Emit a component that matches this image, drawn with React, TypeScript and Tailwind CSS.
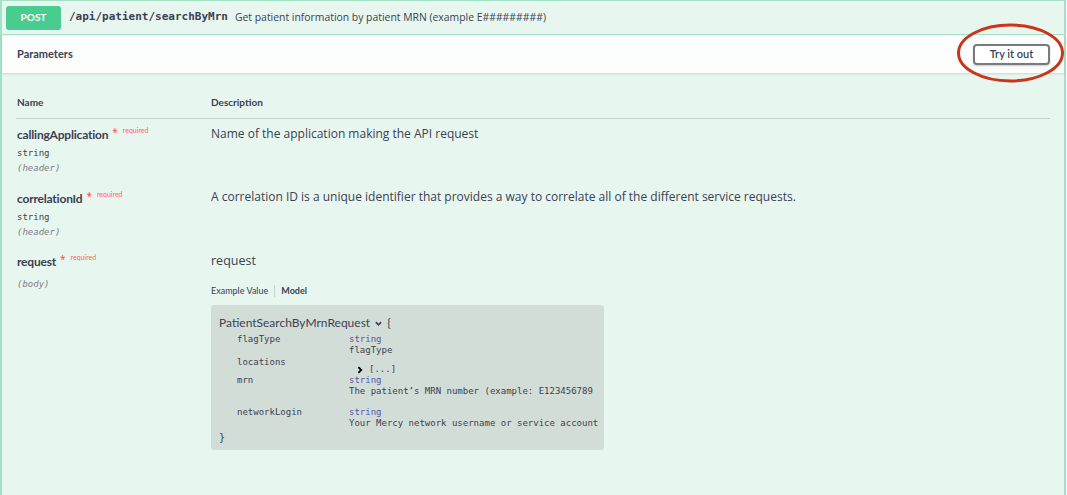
import React from "react";

const sans = { fontFamily: "Lato, 'Open Sans', sans-serif" };
const open = { fontFamily: "'Open Sans', 'Noto Sans', sans-serif" };
const mono = { fontFamily: "'DejaVu Sans Mono', 'Liberation Mono', monospace" };

function Required() {
  return (
    <>
      <span className="text-[#ff4d4d] text-[10px] ml-[4px] relative top-[-3px]">*</span>
      <span className="text-[#ff6666] text-[7px] ml-[5px] relative top-[-6px]" style={sans}>
        required
      </span>
    </>
  );
}

function ParamRow({
  name,
  type,
  loc,
  children,
  className,
}: {
  name: string;
  type?: string;
  loc: string;
  children: React.ReactNode;
  className?: string;
}) {
  return (
    <div className={"flex " + (className || "")}>
      <div className="w-[195px] shrink-0 pl-[1px]">
        <div className="flex items-baseline h-[16px] leading-[16px]">
          <span className="text-[12px] font-bold text-[#3b4151] tracking-[-0.2px]" style={sans}>
            {name}
          </span>
          <Required />
        </div>
        {type ? (
          <div className="text-[9px] leading-[11px] mt-[5px] text-[#3b4151]" style={mono}>
            {type}
          </div>
        ) : null}
        <div
          className={"text-[9px] leading-[11px] italic text-[#808080] " + (type ? "mt-[4px]" : "mt-[9px]")}
          style={mono}
        >
          {loc}
        </div>
      </div>
      <div className="flex-1">{children}</div>
    </div>
  );
}

function PropRow({ name, children, className }: { name: string; children: React.ReactNode; className?: string }) {
  return (
    <div className={"flex text-[9px] leading-[11px] text-[#3b4151] " + (className || "")} style={mono}>
      <div className="w-[130px] shrink-0 pl-[18px]">{name}</div>
      <div className="flex-1 whitespace-nowrap">{children}</div>
    </div>
  );
}

export default function App() {
  return (
    <div className="w-[1067px] h-[495px] bg-white overflow-hidden relative">
      <div className="w-[1066px] h-[495px] bg-[#e8f6f0] border-t border-l-2 border-r-2 border-[#a3e2c7] flex flex-col">
        {/* header */}
        <div className="h-[34px] shrink-0 flex items-center pl-[4px] border-b border-[#a3e2c7]">
          <div
            className="w-[55px] h-[24px] rounded-[3px] bg-[#49cc90] text-white text-[10px] font-bold flex items-center justify-center"
            style={sans}
          >
            POST
          </div>
          <span className="ml-[8px] text-[11px] font-semibold text-[#3b4151]" style={mono}>
            /api/patient/searchByMrn
          </span>
          <span className="ml-[7px] text-[10.4px] text-[#3b4151]" style={open}>
            Get patient information by patient MRN (example E#########)
          </span>
        </div>

        {/* parameters bar */}
        <div className="h-[38px] shrink-0 bg-[#fcfefd] shadow-[0_1px_2px_rgba(0,0,0,0.12)] flex items-center justify-between pl-[15px] pr-[14px]">
          <span className="text-[11px] font-bold text-[#3b4151]" style={sans}>
            Parameters
          </span>
          <button
            className="w-[77px] h-[21px] rounded-[4px] border-2 border-[#7a7a7a] bg-white text-[11px] font-semibold text-[#3b4151] shadow-[0_1px_2px_rgba(0,0,0,0.2)] flex items-center justify-center"
            style={sans}
          >
            Try it out
          </button>
        </div>

        {/* table */}
        <div className="px-[14px] pt-[22px]">
          <div className="flex border-b border-[#c7d3ce] pb-[8px] text-[10px] font-bold text-[#3b4151]" style={sans}>
            <div className="w-[195px] pl-[1px]">Name</div>
            <div>Description</div>
          </div>

          <ParamRow name="callingApplication" type="string" loc="(header)" className="pt-[8px]">
            <div className="text-[12px] leading-[16px] text-[#3b4151] -mt-[1px]" style={open}>
              Name of the application making the API request
            </div>
          </ParamRow>

          <ParamRow name="correlationId" type="string" loc="(header)" className="pt-[17px]">
            <div className="text-[12px] leading-[16px] text-[#3b4151] -mt-[2px]" style={open}>
              A correlation ID is a unique identifier that provides a way to correlate all of the different service requests.
            </div>
          </ParamRow>

          <ParamRow name="request" loc="(body)" className="pt-[16px]">
            <div className="text-[12.5px] leading-[16px] text-[#3b4151] -mt-[1px]" style={open}>
              request
            </div>
            <div className="flex items-center mt-[16px] text-[9px] leading-[12px] text-[#3b4151]" style={sans}>
              <span className="pr-[6px] border-r border-[#c7d3ce]">Example Value</span>
              <span className="pl-[6px] font-bold">Model</span>
            </div>
            <div className="mt-[8px] w-[393px] bg-[#d3ddd8] rounded-[3px] pl-[8px] pt-[10px] pb-[4px]">
              <div className="flex items-center h-[16px] text-[12px] text-[#3b4151]" style={sans}>
                <span>PatientSearchByMrnRequest</span>
                <svg width="9" height="9" viewBox="0 0 20 20" className="ml-[4px]">
                  <path d="M4 7 L10 13 L16 7" fill="none" stroke="#3b4151" strokeWidth="3.5" />
                </svg>
                <span className="ml-[4px]">{"{"}</span>
              </div>
              <PropRow name="flagType" className="mt-[3px]">
                <div className="text-[#5555aa]">string</div>
                <div>flagType</div>
              </PropRow>
              <PropRow name="locations" className="mt-[1px]">
                <div className="pt-[7px] pl-[7px] flex items-center">
                  <svg width="8" height="8" viewBox="0 0 20 20">
                    <path d="M6 3 L13 10 L6 17" fill="none" stroke="#000" strokeWidth="4.5" />
                  </svg>
                  <span className="ml-[5px]">[...]</span>
                </div>
              </PropRow>
              <PropRow name="mrn" className="pb-[10px]">
                <div className="text-[#5555aa]">string</div>
                <div>The patient’s MRN number (example: E123456789</div>
              </PropRow>
              <PropRow name="networkLogin">
                <div className="text-[#5555aa]">string</div>
                <div>Your Mercy network username or service account</div>
              </PropRow>
              <div className="h-[16px] leading-[16px] mt-[1px] text-[10px] text-[#3b4151]" style={mono}>
                {"}"}
              </div>
            </div>
          </ParamRow>
        </div>
      </div>

      {/* red annotation ellipse */}
      <svg className="absolute left-[955px] top-[22px]" width="112" height="63" viewBox="0 0 112 63">
        <ellipse cx="55.5" cy="31" rx="52" ry="28" fill="none" stroke="#c9341b" strokeWidth="3" />
      </svg>
    </div>
  );
}
